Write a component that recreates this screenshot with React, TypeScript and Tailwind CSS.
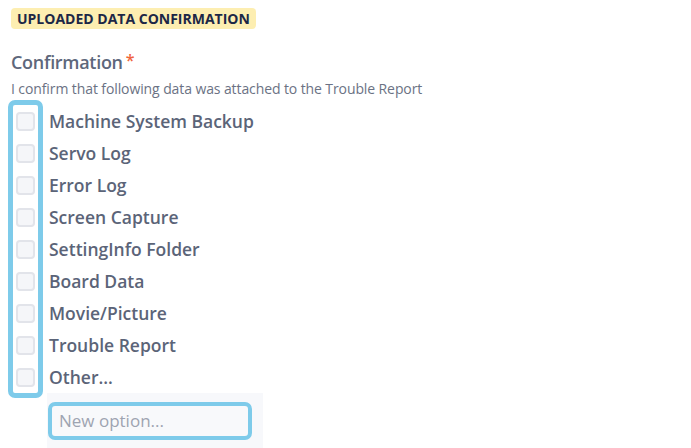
import React from 'react';

const options = ['Machine System Backup', 'Servo Log', 'Error Log', 'Screen Capture', 'SettingInfo Folder', 'Board Data', 'Movie/Picture', 'Trouble Report', 'Other...'];

export default function App() {
  return <div className="w-[691px] h-[448px] overflow-hidden bg-white pl-[11px] pt-[8px] font-['Open_Sans','Noto_Sans',sans-serif]">
      <div className="w-fit rounded-[4px] bg-[#fdeeb1] px-[6px] h-[21px] leading-[21px] text-[14px] font-bold text-[#1c2746]">
        UPLOADED DATA CONFIRMATION
      </div>
      <div className="mt-[21px] flex items-start text-[18px] leading-[24px] font-semibold text-[#5d677b] tracking-[-0.3px]">
        Confirmation<span className="ml-[3px] text-[#f0643c] text-[16px] leading-[20px]">*</span>
      </div>
      <div className="mt-[6px] text-[14px] leading-[18px] text-[#6b7284] tracking-[-0.1px]">
        I confirm that following data was attached to the Trouble Report
      </div>
      <div className="flex -ml-[3px] mt-[2px]">
        <div className="w-[35px] border-[5px] border-[#7ecbea] rounded-[7px] px-[3px]">
          {options.map(o => <div key={o} className="h-8 flex items-center">
              <div className="w-[19px] h-[19px] rounded-[4px] border-2 border-[#e2e4ea] bg-[#f5f6f9]" />
            </div>)}
        </div>
        <div className="pt-[5px] pl-[6px]">
          {options.map(o => <div key={o} className="h-8 flex items-center text-[17.5px] font-semibold text-[#5b6478]">
              {o}
            </div>)}
        </div>
      </div>
      <div className="ml-[36px] -mt-[5px] w-[216px] h-[60px] bg-[#f7f8fb] pt-[9px] pl-[1px]">
        <div className="w-[204px] h-[38px] border-[4px] border-[#7ecbea] rounded-[7px] bg-[#f8f9fb] flex items-center pl-[7px]">
          <input className="w-full bg-transparent outline-none text-[17px] text-[#5b6478] placeholder:text-[#9ea4b1]" placeholder="New option..." />
        </div>
      </div>
    </div>;
}
